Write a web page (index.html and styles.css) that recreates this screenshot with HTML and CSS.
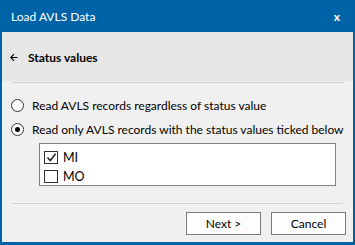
FILE: index.html
```html
<!DOCTYPE html>
<html lang="en">
<head>
  <meta charset="UTF-8">
  <title>Load AVLS Data</title>
  <link rel="stylesheet" href="styles.css">
</head>
<body>
  <div class="window">
    <div class="titlebar">
      <span>Load AVLS Data</span>
      <span class="close">x</span>
    </div>

    <div class="main">
      <div class="header">
        <svg class="back" width="8" height="9" viewBox="0 0 8 9">
          <path d="M7.5 4.5H0.8M4 1.2L0.8 4.5 4 7.8" fill="none" stroke="#000" stroke-width="1.1"/>
        </svg>
        <span class="header-title">Status values</span>
      </div>
      <div class="rule"></div>

      <div class="content">
        <div class="option">
          <span class="radio"></span>
          <span>Read AVLS records regardless of status value</span>
        </div>
        <div class="option">
          <span class="radio checked"></span>
          <span>Read only AVLS records with the status values ticked below</span>
        </div>

        <div class="list">
          <div class="item">
            <span class="check">
              <svg width="11" height="11" viewBox="0 0 11 11">
                <path d="M1.5 5.5l2.8 3L9.6 1.8" fill="none" stroke="#222" stroke-width="1.6"/>
              </svg>
            </span>
            <span>MI</span>
          </div>
          <div class="item">
            <span class="check"></span>
            <span>MO</span>
          </div>
        </div>
      </div>

      <div class="rule"></div>
      <div class="buttons">
        <button class="btn">Next &gt;</button>
        <button class="btn">Cancel</button>
      </div>
    </div>
  </div>
</body>
</html>
```

FILE: styles.css
```css
:root {
  --blue: #0063a8;
  --panel: #f0f0f0;
  --header: #e6e6e6;
  --rule: #cfcfcf;
  --text: #000000;
}

* {
  box-sizing: border-box;
  margin: 0;
  padding: 0;
}

body {
  font-family: Lato, 'Noto Sans', sans-serif;
  font-size: 12px;
  color: var(--text);
  background: #ffffff;
}

.window {
  width: 355px;
  height: 245px;
  background: var(--blue);
  display: flex;
  flex-direction: column;
}

.titlebar {
  height: 32px;
  padding: 0 15px 0 11px;
  display: flex;
  align-items: center;
  justify-content: space-between;
  color: #ffffff;
  font-size: 12px;
}

.close {
  font-weight: 700;
}

.main {
  flex: 1;
  margin: 0 2px 3px;
  background: var(--panel);
  display: flex;
  flex-direction: column;
}

.header {
  height: 49px;
  background: var(--header);
  display: flex;
  align-items: center;
  padding: 2px 0 0 8px;
}

.back {
  margin-right: 10px;
}

.header-title {
  font-weight: 700;
  font-size: 12px;
}

.rule {
  height: 1px;
  margin: 1px 10px 0;
  background: var(--rule);
}

.content {
  padding: 10px 0 0 9px;
  height: 119px;
  white-space: nowrap;
}

.option {
  display: flex;
  align-items: center;
  height: 24px;
  gap: 8px;
}

.radio {
  flex-shrink: 0;
  width: 13px;
  height: 13px;
  border: 1px solid #333333;
  border-radius: 50%;
  background: #ffffff;
  display: flex;
  align-items: center;
  justify-content: center;
}

.radio.checked::after {
  content: '';
  width: 5px;
  height: 5px;
  border-radius: 50%;
  background: #000000;
}

.list {
  margin: 2px 0 0 28px;
  width: 297px;
  height: 43px;
  border: 1px solid #828282;
  background: #ffffff;
  padding: 4px 0 0 4px;
}

.item {
  display: flex;
  align-items: center;
  height: 19px;
  gap: 5px;
  font-size: 12.5px;
}

.check {
  width: 14px;
  height: 13px;
  border: 1px solid #333333;
  background: #ffffff;
  display: flex;
  align-items: center;
  justify-content: center;
}

.buttons {
  display: flex;
  justify-content: flex-end;
  gap: 10px;
  padding: 8px 7px 0 0;
}

.btn {
  width: 75px;
  height: 23px;
  font-family: inherit;
  font-size: 12px;
  background: #fdfdfd;
  border: 1px solid #7a7a7a;
  color: var(--text);
}
```
